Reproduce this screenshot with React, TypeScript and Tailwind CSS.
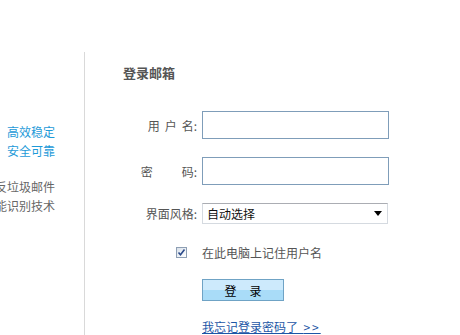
export default function App() {
  return (
    <div className="w-[460px] h-[335px] overflow-hidden bg-white font-['Noto_Sans_CJK_SC',sans-serif] text-[12px]">
      <div className="flex mt-[52px] h-[283px]">
        <div className="w-[85px] shrink-0 border-r border-[#d9d9d9] pr-[29px] flex flex-col items-end">
          <div className="mt-[70px] flex flex-col items-end text-[#1e9ad8] leading-[19px] whitespace-nowrap">
            <div>高效稳定</div>
            <div>安全可靠</div>
          </div>
          <div className="mt-[17px] flex flex-col items-end text-[#666] leading-[19px] whitespace-nowrap">
            <div>反垃圾邮件</div>
            <div>智能识别技术</div>
          </div>
        </div>
        <div className="flex-1 pl-[38px] pt-[12px]">
          <div className="text-[13px] font-bold leading-[17px] text-[#555]">登录邮箱</div>

          <div className="mt-[30px] flex items-center">
            <div className="w-[74px] text-right text-[#555] leading-[17px] whitespace-nowrap">
              <span>用</span>
              <span className="ml-[5px]">户</span>
              <span className="ml-[5px]">名:</span>
            </div>
            <div className="ml-[5px] w-[187px] h-[28px] border border-[#7f9db9] bg-white" />
          </div>

          <div className="mt-[18px] flex items-center">
            <div className="w-[74px] text-right text-[#555] leading-[17px] whitespace-nowrap">
              <span>密</span>
              <span className="ml-[29px]">码:</span>
            </div>
            <div className="ml-[5px] w-[187px] h-[28px] border border-[#7f9db9] bg-white" />
          </div>

          <div className="mt-[18px] flex items-center">
            <div className="w-[74px] text-right text-[#555] leading-[17px] whitespace-nowrap">界面风格:</div>
            <div className="ml-[5px] w-[186px] h-[21px] border border-[#d5dae0] border-t-[#abadb3] bg-white flex items-center justify-between pl-[4px] pr-[4px]">
              <span className="text-[#111] leading-[17px]">自动选择</span>
              <svg width="8" height="5" viewBox="0 0 8 5" className="mr-[1px]">
                <path d="M0 0 H8 L4 5 Z" fill="#000" />
              </svg>
            </div>
          </div>

          <div className="mt-[20px] flex items-center">
            <div className="w-[74px] flex justify-end pr-[10px]">
              <div className="w-[11px] h-[11px] border border-[#8e9fb4] bg-[linear-gradient(135deg,#d9e1ea,#ffffff)] flex items-center justify-center">
                <svg width="9" height="9" viewBox="0 0 9 9">
                  <path d="M1.5 4.5 L3.5 6.8 L7.5 1.5" stroke="#2b4a8a" strokeWidth="1.6" fill="none" />
                </svg>
              </div>
            </div>
            <div className="ml-[5px] text-[#555] leading-[17px] whitespace-nowrap">在此电脑上记住用户名</div>
          </div>

          <div className="mt-[18px] ml-[79px] w-[82px] h-[22px] border border-[#6fa3c5] bg-[linear-gradient(#cdeafc_50%,#a9dcf8_50%)] flex items-center justify-center gap-[13px] text-black leading-[17px]">
            <span>登</span>
            <span>录</span>
          </div>

          <div className="mt-[17px] ml-[79px] leading-[17px] whitespace-nowrap">
            <span className="text-[#1d56a6] underline">我忘记登录密码了&nbsp;&nbsp;<span className="tracking-[2px]">&gt;&gt;</span></span>
          </div>
        </div>
      </div>
    </div>
  );
}
